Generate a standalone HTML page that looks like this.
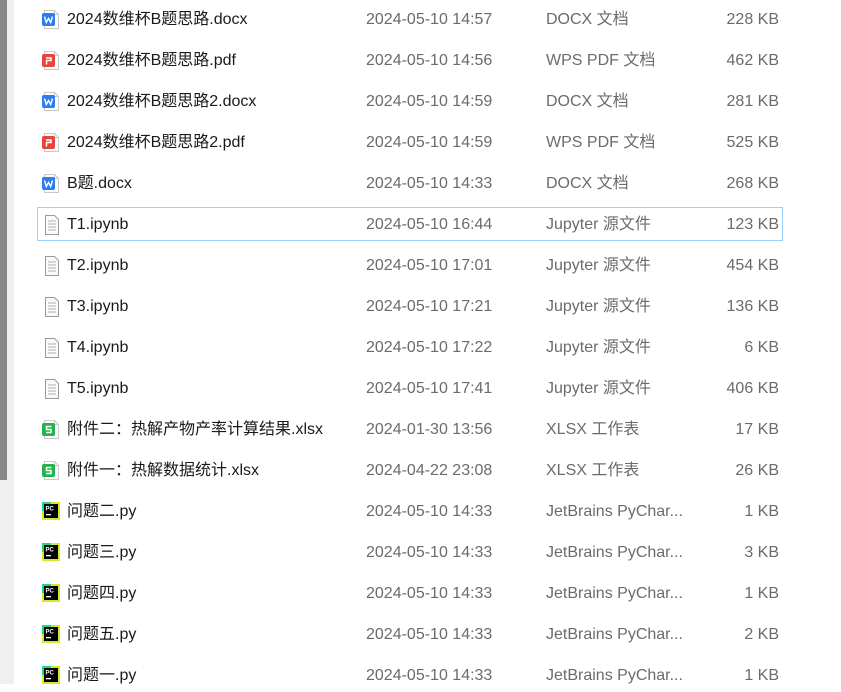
<!DOCTYPE html>
<html><head><meta charset="utf-8"><style>
body{margin:0;width:841px;height:684px;background:#fff;position:relative;overflow:hidden;font-family:"Liberation Sans","Noto Sans CJK SC",sans-serif;font-size:16px}
.sb{position:absolute;left:0;top:0;width:14px;height:684px;background:#f0f0f0}
.th{position:absolute;left:0;top:0;width:7px;height:480px;background:#888}
.r{position:absolute;left:37px;width:746px;height:34px}
.r span{position:absolute;top:8px;white-space:nowrap;line-height:20px}
.n{left:30px;color:#1a1a1a}
.d{left:329px;color:#6b6b6b}
.t{left:509px;color:#6b6b6b}
.s{right:4px;color:#6b6b6b}
.sel{border:1px solid #99d1ff;box-sizing:border-box}
.sel span{top:7px;margin-left:-1px}
.sel .s{right:3px;margin-left:0}
.i{position:absolute;left:5px;top:8px}
.sel .i{left:4px;top:7px}
</style></head><body>
<div class="sb"></div><div class="th"></div>
<svg width="0" height="0" style="position:absolute"><defs>
<g id="pg"><path d="M2.5 .5h10l4 4v14h-14z" fill="#fff" stroke="#c8c8c8"/><path d="M12.5 .5v4h4" fill="none" stroke="#c8c8c8"/></g>
</defs></svg>
<div id="rows"></div>
<script>
const W='<svg class="i" width="18" height="20"><use href="#pg"/><rect x="0" y="3" width="13" height="13" rx="2" fill="#2b7df0"/><path d="M2.5 6.5l1.8 6 2.2-4 2.2 4 1.8-6" fill="none" stroke="#fff" stroke-width="1.4"/></svg>';
const P='<svg class="i" width="18" height="20"><use href="#pg"/><rect x="0" y="3" width="13" height="13" rx="2" fill="#e8443a"/><path d="M4 7h5v2.5H4.5v4M4 7" fill="none" stroke="#fff" stroke-width="1.5"/></svg>';
const J='<svg class="i" width="18" height="20"><path d="M3.5 .5h9l4 4v15h-13z" fill="#fafafa" stroke="#9a9a9a"/><path d="M6 6h8M6 9h8M6 12h8M6 15h8" stroke="#b0b0b0"/></svg>';
const X='<svg class="i" width="18" height="20"><use href="#pg"/><rect x="0" y="3" width="13" height="13" rx="2" fill="#22b34c"/><path d="M9.5 6.5h-5v3h4.5v3h-5" fill="none" stroke="#fff" stroke-width="1.5"/></svg>';
const Y='<svg class="i" width="18" height="18" style="top:8px"><rect width="18" height="18" fill="#d5e830"/><rect x="0" y="0" width="9" height="9" fill="#21d789"/><rect x="2" y="2" width="14" height="14" fill="#000"/><text x="3.5" y="8.5" font-size="6" fill="#fff" font-family="Liberation Sans" font-weight="bold">PC</text><rect x="4" y="12" width="5" height="1.3" fill="#fff"/></svg>';
const d=[
[W,'2024数维杯B题思路.docx','2024-05-10 14:57','DOCX 文档','228 KB'],
[P,'2024数维杯B题思路.pdf','2024-05-10 14:56','WPS PDF 文档','462 KB'],
[W,'2024数维杯B题思路2.docx','2024-05-10 14:59','DOCX 文档','281 KB'],
[P,'2024数维杯B题思路2.pdf','2024-05-10 14:59','WPS PDF 文档','525 KB'],
[W,'B题.docx','2024-05-10 14:33','DOCX 文档','268 KB'],
[J,'T1.ipynb','2024-05-10 16:44','Jupyter 源文件','123 KB'],
[J,'T2.ipynb','2024-05-10 17:01','Jupyter 源文件','454 KB'],
[J,'T3.ipynb','2024-05-10 17:21','Jupyter 源文件','136 KB'],
[J,'T4.ipynb','2024-05-10 17:22','Jupyter 源文件','6 KB'],
[J,'T5.ipynb','2024-05-10 17:41','Jupyter 源文件','406 KB'],
[X,'附件二：热解产物产率计算结果.xlsx','2024-01-30 13:56','XLSX 工作表','17 KB'],
[X,'附件一：热解数据统计.xlsx','2024-04-22 23:08','XLSX 工作表','26 KB'],
[Y,'问题二.py','2024-05-10 14:33','JetBrains PyChar...','1 KB'],
[Y,'问题三.py','2024-05-10 14:33','JetBrains PyChar...','3 KB'],
[Y,'问题四.py','2024-05-10 14:33','JetBrains PyChar...','1 KB'],
[Y,'问题五.py','2024-05-10 14:33','JetBrains PyChar...','2 KB'],
[Y,'问题一.py','2024-05-10 14:33','JetBrains PyChar...','1 KB']];
let h='';d.forEach((r,i)=>{h+=`<div class="r${i==5?' sel':''}" style="top:${2+41*i}px">${r[0]}<span class="n">${r[1]}</span><span class="d">${r[2]}</span><span class="t">${r[3]}</span><span class="s">${r[4]}</span></div>`});
document.getElementById('rows').innerHTML=h;
</script>
</body></html>
